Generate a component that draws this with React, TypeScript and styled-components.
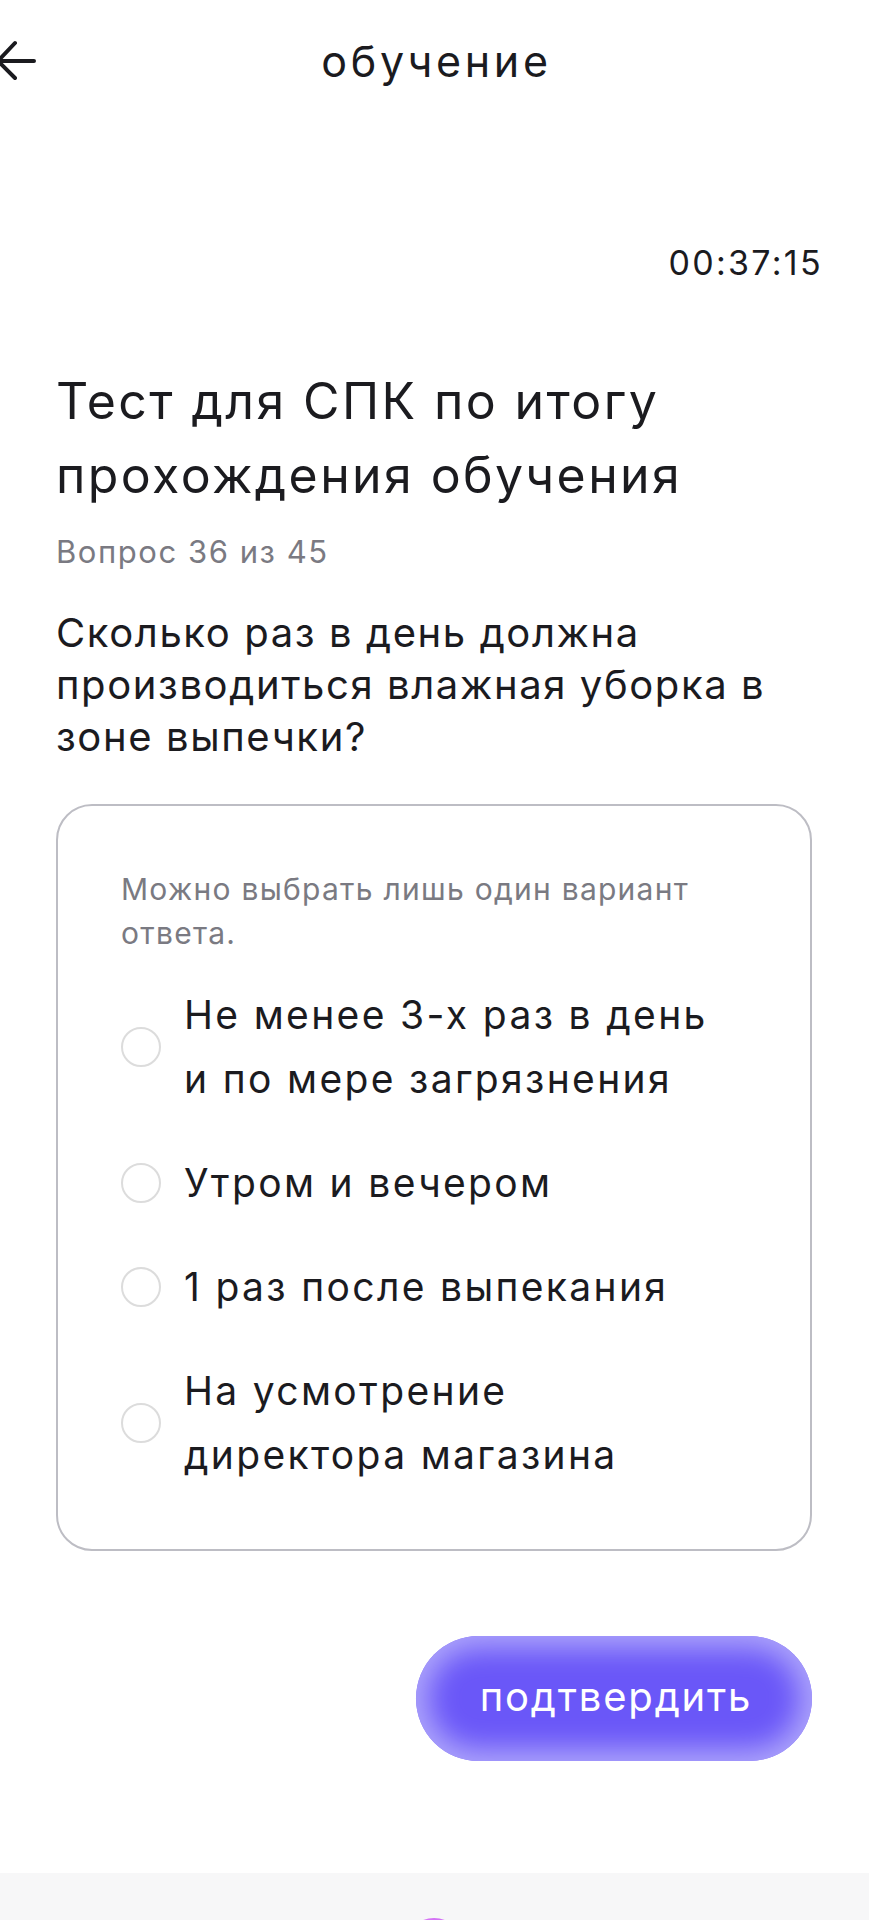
import React from "react";
import styled, { createGlobalStyle } from "styled-components";

const Global = createGlobalStyle`
  html, body { margin: 0; padding: 0; background: #ffffff; }
  body { font-family: Inter, "Noto Sans", sans-serif; color: #1b1b1f; -webkit-font-smoothing: antialiased; }
  * { box-sizing: border-box; }
`;

const Page = styled.div`
  width: 869px;
  height: 1920px;
  overflow: hidden;
  display: flex;
  flex-direction: column;
  background: #ffffff;
`;

const Header = styled.header`
  height: 122px;
  display: grid;
  grid-template-columns: 1fr auto 1fr;
  align-items: center;
`;

const BackButton = styled.button`
  justify-self: start;
  width: 40px;
  height: 44px;
  padding: 0;
  border: 0;
  background: none;
  display: flex;
  align-items: center;
  svg { overflow: visible; display: block; }
`;

const HeaderTitle = styled.h1`
  margin: 0;
  padding-left: 4px;
  font-size: 43px;
  font-weight: 400;
  line-height: 50px;
  letter-spacing: 0.085em;
  color: #1b1b1f;
`;

const Content = styled.main`
  display: flex;
  flex-direction: column;
  padding: 0 57px 0 56px;
`;

const Timer = styled.div`
  align-self: flex-end;
  margin: 119px -11px 0 0;
  font-size: 34px;
  line-height: 44px;
  letter-spacing: 0.068em;
  color: #1b1b1f;
`;

const TestTitle = styled.h2`
  margin: 79px 0 0;
  font-size: 50px;
  font-weight: 400;
  line-height: 74px;
  letter-spacing: 0.048em;
  color: #1b1b1f;
`;

const Counter = styled.div`
  margin-top: 18px;
  font-size: 31px;
  line-height: 44px;
  letter-spacing: 0.05em;
  color: #7a7a82;
`;

const Question = styled.p`
  margin: 33px 0 0;
  font-size: 40px;
  line-height: 52px;
  letter-spacing: 0.04em;
  color: #1b1b1f;
`;

const Card = styled.section`
  margin-top: 41px;
  border: 2px solid #bdbdc4;
  border-radius: 36px;
  padding: 61px 30px 62px 63px;
  display: flex;
  flex-direction: column;
`;

const Hint = styled.div`
  font-size: 30px;
  line-height: 44px;
  letter-spacing: 0.042em;
  color: #7a7a82;
`;

const Options = styled.div`
  margin-top: 28px;
  display: flex;
  flex-direction: column;
  gap: 40px;
`;

const Option = styled.label`
  display: flex;
  align-items: center;
  gap: 23px;
  cursor: pointer;
`;

const Radio = styled.span`
  flex: 0 0 40px;
  width: 40px;
  height: 40px;
  border-radius: 50%;
  border: 2px solid #dcdcdc;
  background: #ffffff;
`;

const OptionText = styled.span`
  font-size: 39px;
  line-height: 64px;
  letter-spacing: 0.06em;
  color: #1b1b1f;
`;

const Actions = styled.div`
  margin-top: 85px;
  display: flex;
  justify-content: flex-end;
`;

const ConfirmButton = styled.button`
  width: 396px;
  height: 125px;
  border: 0;
  border-radius: 63px;
  background: #6a57f8;
  box-shadow: inset 0 0 28px 12px #aea5fb;
  color: #ffffff;
  font-family: Inter, "Noto Sans", sans-serif;
  font-size: 40px;
  line-height: 50px;
  letter-spacing: 0.045em;
  padding: 0 0 4px 4px;
  cursor: pointer;
`;

const Footer = styled.nav`
  margin-top: auto;
  height: 47px;
  background: #f7f7f8;
  display: flex;
  align-items: flex-start;
  padding: 45px 20px 0 404px;
`;

const NavMain = styled.span`
  width: 60px;
  height: 60px;
  border-radius: 50%;
  background: linear-gradient(135deg, #e07af6 0%, #b35cf3 100%);
`;

const NavGhost = styled.span`
  margin-left: auto;
  width: 44px;
  height: 44px;
  margin-top: 6px;
  border-radius: 50%;
  border: 2px solid #d6d6da;
`;

const options = [
  "Не менее 3-х раз в день\nи по мере загрязнения",
  "Утром и вечером",
  "1 раз после выпекания",
  "На усмотрение\nдиректора магазина",
];

export default function App() {
  return (
    <>
      <Global />
      <Page>
        <Header>
          <BackButton aria-label="Назад">
            <svg width="40" height="44" viewBox="0 0 40 44">
              <path
                d="M-2 22 H34 M-2 22 L15 4 M-2 22 L15 39"
                stroke="#1b1b1f"
                strokeWidth="4"
                strokeLinecap="round"
                strokeLinejoin="round"
                fill="none"
              />
            </svg>
          </BackButton>
          <HeaderTitle>обучение</HeaderTitle>
          <span />
        </Header>
        <Content>
          <Timer>00:37:15</Timer>
          <TestTitle>
            Тест для СПК по итогу
            <br />
            прохождения обучения
          </TestTitle>
          <Counter>Вопрос 36 из 45</Counter>
          <Question>
            Сколько раз в день должна
            <br />
            производиться влажная уборка в
            <br />
            зоне выпечки?
          </Question>
          <Card>
            <Hint>
              Можно выбрать лишь один вариант
              <br />
              ответа.
            </Hint>
            <Options>
              {options.map((o) => (
                <Option key={o}>
                  <Radio />
                  <OptionText>
                    {o.split("\n").map((l, i) => (
                      <React.Fragment key={i}>
                        {i > 0 && <br />}
                        {l}
                      </React.Fragment>
                    ))}
                  </OptionText>
                </Option>
              ))}
            </Options>
          </Card>
          <Actions>
            <ConfirmButton>подтвердить</ConfirmButton>
          </Actions>
        </Content>
        <Footer>
          <NavMain />
          <NavGhost />
        </Footer>
      </Page>
    </>
  );
}
